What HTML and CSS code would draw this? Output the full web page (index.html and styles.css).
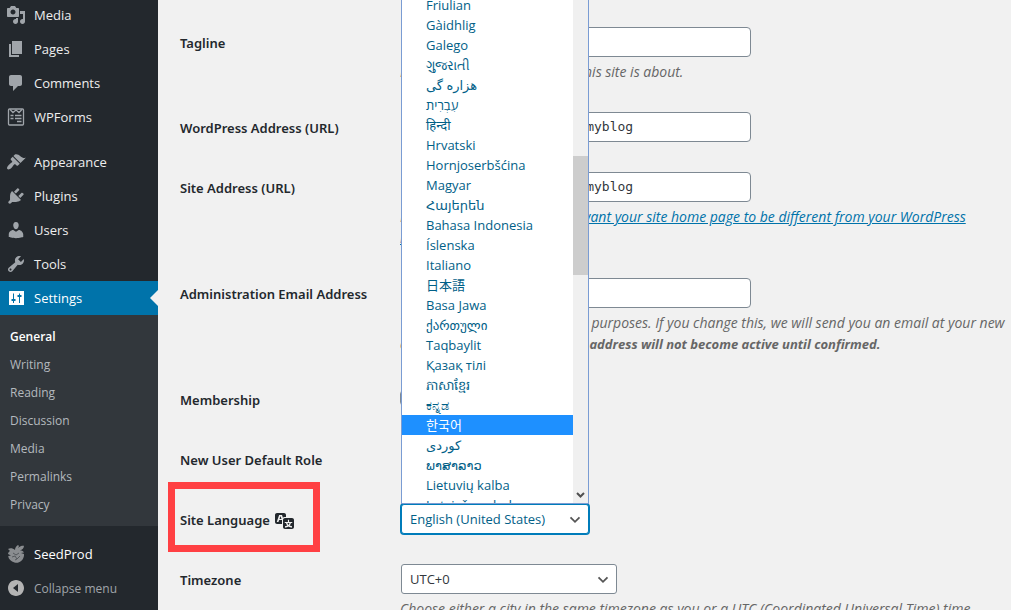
FILE: index.html
```html
<!DOCTYPE html>
<html lang="en">
<head>
<meta charset="utf-8">
<title>General Settings</title>
<link rel="stylesheet" href="styles.css">
</head>
<body>
<div class="layout">
  <nav class="sidebar" aria-label="Main menu">
    <ul class="menu">
      <li><a class="menu-link" href="#"><svg class="icon" viewBox="0 0 20 20"><path d="M13 11V4c0-.55-.45-1-1-1h-1.67L9 1H5L3.67 3H2c-.55 0-1 .45-1 1v7c0 .55.45 1 1 1h10c.55 0 1-.45 1-1zM7 4.5c1.38 0 2.5 1.12 2.5 2.5S8.38 9.5 7 9.5 4.5 8.38 4.5 7 5.62 4.5 7 4.5zM14 6h5v10.5c0 1.38-1.12 2.5-2.5 2.5S14 17.88 14 16.5s1.12-2.5 2.5-2.5c.17 0 .34.02.5.05V9h-3V6zm-4 8.05V13h2v3.5c0 1.38-1.12 2.5-2.5 2.5S7 17.88 7 16.5 8.12 14 9.5 14c.17 0 .34.02.5.05z"/></svg>Media</a></li>
      <li><a class="menu-link" href="#"><svg class="icon" viewBox="0 0 20 20"><path d="M6 15V2h10v13H6zm-1 1h8v2H3V5h2v11z"/></svg>Pages</a></li>
      <li><a class="menu-link" href="#"><svg class="icon" viewBox="0 0 20 20"><path d="M5 2h9c1.1 0 2 .9 2 2v7c0 1.1-.9 2-2 2h-2l-5 5v-5H5c-1.1 0-2-.9-2-2V4c0-1.1.9-2 2-2z"/></svg>Comments</a></li>
      <li><a class="menu-link" href="#"><svg class="icon icon-line" viewBox="0 0 20 20"><rect x="2.5" y="2" width="15" height="16" rx="1"/><path d="M4 2.5l3 3 3-2.500 3 2.500 3-3M4.500 8.500h3M9 8.500h6.500M4.500 11.500h3M9 11.500h6.500M11 14.500h4.500"/></svg>WPForms</a></li>
    </ul>
    <ul class="menu">
      <li><a class="menu-link" href="#"><svg class="icon" viewBox="0 0 20 20"><path d="M14.48 11.06L7.41 3.99l1.5-1.5c.5-.56 2.3-.47 3.51.32 1.21.8 1.43 1.28 2.91 2.1 1.18.64 2.45 1.26 4.45.85zm-.71.71L6.7 4.7 4.93 6.47c-.39.39-.39 1.02 0 1.41l1.06 1.06c.39.39.39 1.03 0 1.42-.6.6-1.43 1.11-2.21 1.69-.35.26-.7.53-1.01.84C1.43 14.23.4 16.08 1.4 17.07c.99 1 2.84-.03 4.18-1.36.31-.31.58-.66.85-1.02.57-.78 1.08-1.61 1.69-2.21.39-.39 1.02-.39 1.41 0l1.06 1.06c.39.39 1.02.39 1.41 0z"/></svg>Appearance</a></li>
      <li><a class="menu-link" href="#"><svg class="icon" viewBox="0 0 20 20"><path d="M13.11 4.36L9.87 7.6 8 5.73l3.24-3.24c.35-.34 1.05-.2 1.56.32.52.51.66 1.21.31 1.55zm-8 1.77l.91-1.12 9.01 9.01-1.19.84c-.71.71-2.63 1.16-3.82 1.16H6.14L4.9 17.26c-.59.59-1.54.59-2.12 0-.59-.58-.59-1.53 0-2.12l1.24-1.24v-3.88c0-1.13.4-3.19 1.09-3.89zm7.26 3.97l3.24-3.24c.34-.35 1.04-.21 1.55.31.52.51.66 1.21.31 1.55l-3.24 3.25z"/></svg>Plugins</a></li>
      <li><a class="menu-link" href="#"><svg class="icon" viewBox="0 0 20 20"><path d="M10 9.25c-2.27 0-2.73-3.44-2.73-3.44C7 4.02 7.82 2 9.97 2c2.16 0 2.98 2.02 2.71 3.81 0 0-.41 3.44-2.68 3.44zm0 2.57L12.72 10c2.39 0 4.52 2.33 4.52 4.53v2.49s-3.65 1.13-7.24 1.13c-3.65 0-7.24-1.13-7.24-1.13v-2.49c0-2.25 1.94-4.48 4.47-4.48z"/></svg>Users</a></li>
      <li><a class="menu-link" href="#"><svg class="icon" viewBox="0 0 20 20"><path d="M16.68 9.77c-1.34 1.34-3.3 1.67-4.95.99l-5.41 6.52c-.99.99-2.59.99-3.58 0s-.99-2.59 0-3.57l6.52-5.42c-.68-1.65-.35-3.61.99-4.95 1.28-1.28 3.12-1.62 4.72-1.06l-2.89 2.89 2.82 2.82 2.86-2.87c.53 1.58.18 3.39-1.08 4.65zM3.81 16.21c.4.39 1.04.39 1.43 0 .4-.4.4-1.04 0-1.43-.39-.4-1.03-.4-1.43 0-.39.39-.39 1.03 0 1.43z"/></svg>Tools</a></li>
      <li>
        <a class="menu-link menu-link-current" href="#"><svg class="icon" viewBox="0 0 20 20"><path fill-rule="evenodd" d="M3 3h15v14H3V3.500A.5.5 0 0 1 3.500 3zM7 5.500V11H5.500v2H7v2h1v-2h1.500v-2H8V5.500zM13 5.500V7h-1.500v2H13v6h1V9h1.500V7H14V5.500z"/></svg>Settings</a>
        <ul class="submenu">
          <li><a class="submenu-link submenu-link-current" href="#">General</a></li>
          <li><a class="submenu-link" href="#">Writing</a></li>
          <li><a class="submenu-link" href="#">Reading</a></li>
          <li><a class="submenu-link" href="#">Discussion</a></li>
          <li><a class="submenu-link" href="#">Media</a></li>
          <li><a class="submenu-link" href="#">Permalinks</a></li>
          <li><a class="submenu-link" href="#">Privacy</a></li>
        </ul>
      </li>
    </ul>
    <ul class="menu">
      <li><a class="menu-link menu-link-bright" href="#"><svg class="icon icon-seed" viewBox="0 0 20 20"><path d="M2 5c2-1.500 5-1 7 1 0-2 1-4 3-5l1 1-1 2c2-2 4-2.500 6-2.300-.2 2.500-1.500 4-4 4.500 2 0 3.500 1 4 2.300l-3 .5 3 1c.3 4-2 7-5 8.200-1.500.7-3 .7-4.500.2C5 17.500 2.500 15 2.200 12L5 11.500 2 10c.2-1.500 1-2.500 2-3z"/><path class="seed-lines" d="M7 9l3 2 3-2M6 13l3-1 2 3 3-3M9 16l2-1"/></svg>SeedProd</a></li>
      <li><button class="menu-link menu-collapse" type="button"><svg class="icon" viewBox="0 0 20 20"><path fill-rule="evenodd" d="M10 2c4.420 0 8 3.580 8 8s-3.580 8-8 8-8-3.580-8-8 3.580-8 8-8zM12 6l-5 4 5 4z"/></svg>Collapse menu</button></li>
    </ul>
  </nav>

  <main class="content">
    <form class="form">
      <div class="row">
        <label class="row-label" for="tagline">Tagline</label>
        <div class="row-field">
          <input class="text-input" id="tagline" type="text">
          <p class="description">In a few words, explain what this site is about.</p>
        </div>
      </div>
      <div class="row">
        <label class="row-label" for="siteurl">WordPress Address (URL)</label>
        <div class="row-field">
          <input class="text-input code" id="siteurl" type="text" value="http://www.example.co/myblog">
        </div>
      </div>
      <div class="row">
        <label class="row-label" for="home">Site Address (URL)</label>
        <div class="row-field">
          <input class="text-input code" id="home" type="text" value="http://www.example.co/myblog">
          <p class="description">Enter the address here if you <a class="link" href="#">want your site home page to be different from your WordPress<br>installation directory</a>.</p>
        </div>
      </div>
      <div class="row">
        <label class="row-label" for="email">Administration Email Address</label>
        <div class="row-field">
          <input class="text-input" id="email" type="email">
          <p class="description">This address is used for admin purposes. If you change this, we will send you an email at your new<br>address to confirm it. <strong class="notice">The new address will not become active until confirmed.</strong></p>
        </div>
      </div>
      <div class="row">
        <label class="row-label" for="membership">Membership</label>
        <div class="row-field">
          <input class="checkbox" id="membership" type="checkbox">
        </div>
      </div>
      <div class="row">
        <label class="row-label" for="role">New User Default Role</label>
        <div class="row-field">
          <div class="select-wrap select-role">
            <select class="select" id="role"><option>Subscriber</option></select>
          </div>
        </div>
      </div>
      <div class="row">
        <label class="row-label row-label-marked" for="language">Site Language <svg class="icon-translate" viewBox="0 0 20 20"><path d="M11 7H9.490c-.63 0-1.250.3-1.590.7L7 5H4.130l-2.390 7h1.690l.74-2H7v4H2c-1.100 0-2-.9-2-2V5c0-1.100.9-2 2-2h7c1.100 0 2 .9 2 2v2zM6.510 9H4.490l1-2.930zM10 8h7c1.100 0 2 .9 2 2v7c0 1.100-.9 2-2 2h-7c-1.100 0-2-.9-2-2v-7c0-1.100.9-2 2-2zm7.250 5v-1.080h-3.170V9.750h-1.160v2.170H9.750V13h1.280c.11.85.56 1.850 1.280 2.620-.87.36-1.890.62-2.310.62-.01.02.22.97.2 1.460.84 0 2.210-.5 3.280-1.150 1.090.65 2.480 1.150 3.340 1.150-.02-.49.2-1.440.2-1.460-.43 0-1.490-.27-2.380-.63.7-.77 1.140-1.770 1.250-2.610h1.360zm-3.810 1.930c-.5-.46-.85-1.130-1.010-1.930h2.090c-.17.8-.51 1.470-1 1.930l-.04.03s-.03-.02-.04-.03z"/></svg></label>
        <div class="row-field">
          <div class="select-wrap select-language">
            <select class="select select-open" id="language"><option>English (United States)</option></select>
            <svg class="chevron" viewBox="0 0 20 20"><path d="M5 7l5 5 5-5"/></svg>
            <div class="dropdown">
              <ul class="options" role="listbox" aria-label="Site Language">
                <li class="option" role="option">Friulian</li>
                <li class="option" role="option">Gàidhlig</li>
                <li class="option" role="option">Galego</li>
                <li class="option" role="option">ગુજરાતી</li>
                <li class="option" role="option">هزاره گی</li>
                <li class="option" role="option">עִבְרִית</li>
                <li class="option" role="option">हिन्दी</li>
                <li class="option" role="option">Hrvatski</li>
                <li class="option" role="option">Hornjoserbšćina</li>
                <li class="option" role="option">Magyar</li>
                <li class="option" role="option">Հայերեն</li>
                <li class="option" role="option">Bahasa Indonesia</li>
                <li class="option" role="option">Íslenska</li>
                <li class="option" role="option">Italiano</li>
                <li class="option" role="option" lang="ja">日本語</li>
                <li class="option" role="option">Basa Jawa</li>
                <li class="option" role="option">ქართული</li>
                <li class="option" role="option">Taqbaylit</li>
                <li class="option" role="option">Қазақ тілі</li>
                <li class="option" role="option">ភាសាខ្មែរ</li>
                <li class="option" role="option">ಕನ್ನಡ</li>
                <li class="option option-active" role="option" aria-selected="true" lang="ko">한국어</li>
                <li class="option" role="option">كوردی‎</li>
                <li class="option" role="option">ພາສາລາວ</li>
                <li class="option" role="option">Lietuvių kalba</li>
                <li class="option" role="option">Latviešu valoda</li>
              </ul>
              <div class="scrollbar">
                <div class="scroll-thumb"></div>
                <svg class="scroll-arrow" viewBox="0 0 15 15"><path d="M4 5l3.500 3.500L11 5"/></svg>
              </div>
            </div>
          </div>
        </div>
      </div>
      <div class="row">
        <label class="row-label" for="timezone">Timezone</label>
        <div class="row-field">
          <div class="select-wrap select-timezone">
            <select class="select" id="timezone"><option>UTC+0</option></select>
            <svg class="chevron" viewBox="0 0 20 20"><path d="M5 7l5 5 5-5"/></svg>
          </div>
          <p class="description">Choose either a city in the same timezone as you or a UTC (Coordinated Universal Time) time</p>
        </div>
      </div>
    </form>
  </main>
</div>
</body>
</html>
```
FILE: styles.css
```css
* {
  box-sizing: border-box;
}

body {
  margin: 0;
  height: 100vh;
  overflow: hidden;
  background: #f1f1f1;
  color: #23282d;
  font-family: "Open Sans", "Noto Sans", "DejaVu Sans", "Noto Sans CJK JP", sans-serif;
  font-size: 13px;
}

ul {
  margin: 0;
  padding: 0;
  list-style: none;
}

.layout {
  display: flex;
  height: 100vh;
}

/* Sidebar */

.sidebar {
  display: flex;
  flex: 0 0 158px;
  flex-direction: column;
  gap: 11px;
  margin-top: -2px;
  background: #23282d;
}

.menu-link {
  display: flex;
  position: relative;
  align-items: center;
  gap: 8px;
  width: 100%;
  height: 34px;
  padding: 0 6px;
  border: 0;
  background: none;
  color: #eee;
  font: inherit;
  text-decoration: none;
  white-space: nowrap;
}

.icon {
  flex: none;
  width: 20px;
  height: 20px;
  fill: #a0a5aa;
}

.icon-line {
  fill: none;
  stroke: #a0a5aa;
  stroke-width: 1.3;
}

.icon-seed {
  fill: #8a8d90;
}

.seed-lines {
  fill: none;
  stroke: #55595d;
}

.menu-link-current {
  background: #0073aa;
  color: #fff;
}

.menu-link-current .icon {
  fill: #fff;
}

.menu-link-current::after {
  content: "";
  position: absolute;
  top: 9px;
  right: 0;
  border: 8px solid transparent;
  border-left: 0;
  border-right-color: #f1f1f1;
}

.menu-link-bright {
  color: #fff;
}

.menu-collapse {
  color: #a0a5aa;
  font-size: 12px;
}

.menu-collapse .icon {
  fill: #b4b4b4;
}

.submenu {
  padding: 8px 0 7px;
  background: #32373c;
}

.submenu-link {
  display: block;
  padding: 0 10px;
  color: #b4b9be;
  font-size: 12px;
  line-height: 28px;
  text-decoration: none;
}

.submenu-link-current {
  color: #fff;
  font-weight: 600;
}

/* Form */

.content {
  flex: 1;
  min-width: 0;
  padding: 12px 0 0 22px;
  overflow: hidden;
}

.row {
  display: grid;
  grid-template-columns: 220px 1fr;
}

.row-label {
  align-self: start;
  justify-self: start;
  padding: 21px 0 19px;
  font-family: "Noto Sans", sans-serif;
  font-weight: 600;
  line-height: 20px;
}

.row-label-marked {
  display: flex;
  position: relative;
  align-items: center;
  gap: 5px;
}

.row-label-marked::after {
  content: "";
  position: absolute;
  inset: -7px -25px -3px -12px;
  border: 7px solid #ff4043;
}

.icon-translate {
  width: 20px;
  height: 20px;
  fill: #23282d;
}

.row-field {
  min-width: 0;
  padding: 15px 0;
}

.text-input,
.select {
  display: block;
  height: 30px;
  border: 1px solid #7e8993;
  border-radius: 4px;
  background: #fff;
  color: #32373c;
  font: inherit;
}

.text-input {
  width: 350px;
  margin: 0 1px;
  padding: 0 8px;
}

.code {
  padding: 0 12px 2px;
  font-family: "DejaVu Sans Mono", monospace;
}

.description {
  margin: 4px 0 0;
  color: #666;
  font-size: 14px;
  font-style: italic;
  line-height: 21px;
  white-space: nowrap;
}

.notice {
  font-size: 13px;
  line-height: 1;
}

.link {
  color: #0073aa;
}

.checkbox {
  display: block;
  appearance: none;
  width: 16px;
  height: 16px;
  margin: 6px 0 8px;
  border: 1px solid #7e8993;
  border-radius: 4px;
  background: #fff;
}

.select-wrap {
  position: relative;
  margin: 0 1px;
}

.select-role {
  width: 120px;
}

.select-language {
  width: 188px;
}

.select-timezone {
  width: 216px;
}

.select {
  appearance: none;
  width: 100%;
  padding: 0 24px 0 8px;
  border-radius: 3px;
}

.select-open {
  border-color: #007cba;
  box-shadow: 0 0 0 1px #007cba;
  color: #016087;
}

.chevron {
  position: absolute;
  top: 7px;
  right: 5px;
  width: 18px;
  height: 18px;
  fill: none;
  stroke: #555;
  stroke-width: 2;
  pointer-events: none;
}

/* Open language list */

.dropdown {
  display: flex;
  position: absolute;
  bottom: 100%;
  left: 0;
  width: 100%;
  height: 509px;
  overflow: hidden;
  border: 1px solid #7a9cd3;
  border-top: 0;
  background: #fff;
}

.options {
  flex: 1;
}

.option {
  height: 20px;
  padding-left: 24px;
  color: #016087;
  line-height: 20px;
  white-space: nowrap;
}

.option-active {
  background: #1e90ff;
  color: #fff;
}

.scrollbar {
  position: relative;
  width: 15px;
  background: #f0f0f0;
}

.scroll-thumb {
  height: 119px;
  margin-top: 161px;
  background: #cdcdcd;
}

.scroll-arrow {
  position: absolute;
  bottom: 0;
  left: 0;
  width: 15px;
  height: 15px;
  fill: none;
  stroke: #505050;
  stroke-width: 2;
}
```
